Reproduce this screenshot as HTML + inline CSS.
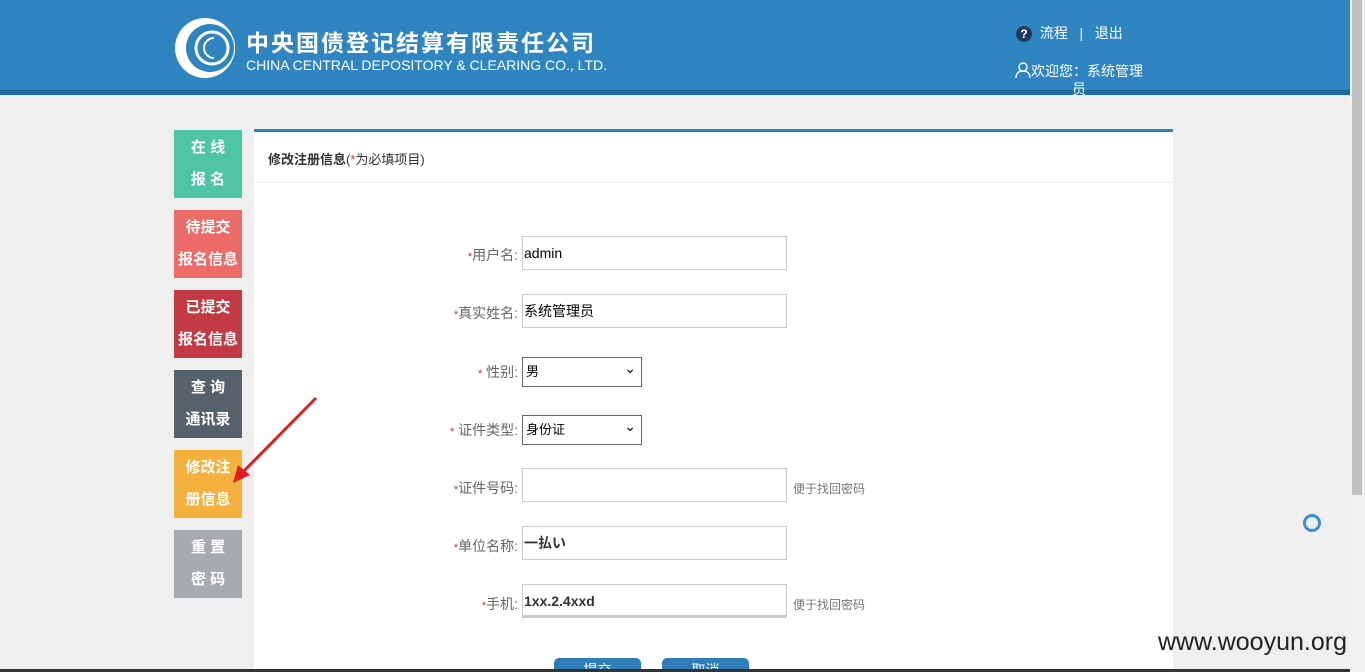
<!DOCTYPE html><html style="overflow:hidden"><head><meta charset="utf-8"><style>
html,body{overflow:hidden}
body{margin:0;width:1365px;height:672px;overflow:hidden;background:#efefef;font-family:"Liberation Sans","Noto Sans CJK SC",sans-serif;position:relative}
.hd{position:absolute;left:0;top:0;width:1350px;height:90px;background:#2e85c0}
.hd2{position:absolute;left:0;top:90px;width:1350px;height:5px;background:#1d6c9e}
.hd3{position:absolute;left:0;top:95px;width:1350px;height:2px;background:#dfeff4}
.sb{position:absolute;left:1350px;top:0;width:15px;height:672px;background:#f1f1f1}
.sb i{position:absolute;left:2px;top:0;width:10px;height:495px;background:#c1c1c1}
.ab{position:absolute;color:#fff}
.nav{position:absolute;left:174px;width:68px;height:68px;color:#fff;font-size:15px;font-weight:bold;text-align:center;line-height:32px;padding-top:2px;box-sizing:border-box}
.panel{position:absolute;left:254px;top:129px;width:919px;height:543px;background:#fff;border-top:3px solid #2e85c0;box-sizing:border-box}
.lbl{position:absolute;font-size:14px;color:#666;text-align:right;width:120px}
.lbl b{color:#c0392b;font-weight:normal;font-size:11px}
.inp{position:absolute;left:522px;width:265px;height:34px;border:1px solid #ccc;box-sizing:border-box;font-size:14px;color:#000;line-height:32px;padding-left:1px}
.sel{position:absolute;left:522px;width:120px;height:30px;border:1px solid #666;box-sizing:border-box;font-size:13px;line-height:28px;padding-left:3px;background:#fff}
.sel:after{content:"⌄";position:absolute;right:5px;top:-4px;font-size:14px}
.hint{position:absolute;left:793px;font-size:12px;color:#777}
.btn{position:absolute;top:658px;width:87px;height:11px;overflow:hidden;background:#2e7fb8;border-radius:5px 5px 0 0;color:#fff;text-align:center;font-size:14px;line-height:24px}
</style></head><body>
<div class="hd"></div><div class="hd2"></div><div class="hd3"></div>
<svg class="ab" style="left:173px;top:16px" width="66" height="64" viewBox="0 0 66 64"><circle cx="32" cy="32" r="30" fill="#fff"/><circle cx="37" cy="32" r="24" fill="#2e85c0"/><circle cx="39" cy="32" r="16" fill="none" stroke="#fff" stroke-width="3"/><path d="M41 22a10 10 0 1 0 0 20" fill="none" stroke="#fff" stroke-width="2"/></svg>
<div class="ab" style="left:246px;top:24px;font-size:23px;font-weight:bold;letter-spacing:2px;white-space:nowrap">中央国债登记结算有限责任公司</div>
<div class="ab" style="left:246px;top:57px;font-size:14px;white-space:nowrap">CHINA CENTRAL DEPOSITORY &amp; CLEARING CO., LTD.</div>
<div class="ab" style="left:1016px;top:23px;font-size:14px"><span style="display:inline-block;width:16px;height:16px;border-radius:8px;background:#1d3a5c;text-align:center;line-height:16px;font-size:12px;font-weight:bold">?</span> &nbsp;流程 &nbsp; | &nbsp; 退出</div>
<div class="ab" style="left:1015px;top:62px;font-size:14px;width:135px;line-height:18px">
<svg width="16" height="16" viewBox="0 0 16 16" style="vertical-align:-2px"><circle cx="8" cy="5" r="4" fill="none" stroke="#fff" stroke-width="1.4"/><path d="M1 16c0-5 3-7 7-7s7 2 7 7" fill="none" stroke="#fff" stroke-width="1.4"/></svg>欢迎您：系统管理<br><span style="padding-left:57px">员</span></div>
<div class="nav" style="top:130px;background:#4fc5a4">在 线<br>报 名</div>
<div class="nav" style="top:210px;background:#ec6b66">待提交<br>报名信息</div>
<div class="nav" style="top:290px;background:#c33a44">已提交<br>报名信息</div>
<div class="nav" style="top:370px;background:#57616c">查 询<br>通讯录</div>
<div class="nav" style="top:450px;background:#f4b13d">修改注<br>册信息</div>
<div class="nav" style="top:530px;background:#a7abae">重 置<br>密 码</div>
<div class="panel"><div style="position:absolute;left:14px;top:17px;font-size:13px;color:#333"><b>修改注册信息</b>(<span style="color:#c0392b">*</span>为必填项目)</div><div style="position:absolute;left:0;top:50px;width:919px;border-top:1px solid #eee"></div></div>
<svg style="position:absolute;left:230px;top:395px" width="90" height="90"><line x1="86" y1="3" x2="10" y2="80" stroke="#e02020" stroke-width="3"/><path d="M3 88 L8 70 L20 80Z" fill="#e02020"/></svg>
<div class="lbl" style="left:398px;top:245px"><b>*</b>用户名:</div><div class="inp" style="top:236px">admin</div>
<div class="lbl" style="left:398px;top:303px"><b>*</b>真实姓名:</div><div class="inp" style="top:294px">系统管理员</div>
<div class="lbl" style="left:398px;top:362px"><b>*</b> 性别:</div><div class="sel" style="top:357px">男</div>
<div class="lbl" style="left:398px;top:420px"><b>*</b> 证件类型:</div><div class="sel" style="top:415px">身份证</div>
<div class="lbl" style="left:398px;top:478px"><b>*</b>证件号码:</div><div class="inp" style="top:468px"></div><div class="hint" style="top:480px">便于找回密码</div>
<div class="lbl" style="left:398px;top:536px"><b>*</b>单位名称:</div><div class="inp" style="top:526px;font-weight:bold;color:#333">一払い</div>
<div class="lbl" style="left:398px;top:594px"><b>*</b>手机:</div><div class="inp" style="top:584px;font-weight:bold;color:#333;border-bottom:3px solid #ccc">1xx.2.4xxd</div><div class="hint" style="top:596px">便于找回密码</div>
<div class="btn" style="left:554px">提交</div><div class="btn" style="left:662px">取消</div>
<div style="position:absolute;left:1303px;top:514px;width:12px;height:12px;border:3px solid #3a8fd8;border-radius:50%"></div>
<div style="position:absolute;left:1158px;top:628px;font-size:25px;color:#222;white-space:nowrap">www.wooyun.org</div>
<div style="position:absolute;left:0;top:669px;width:1350px;height:3px;background:#333"></div>
<div class="sb"><i></i></div>
</body></html>
